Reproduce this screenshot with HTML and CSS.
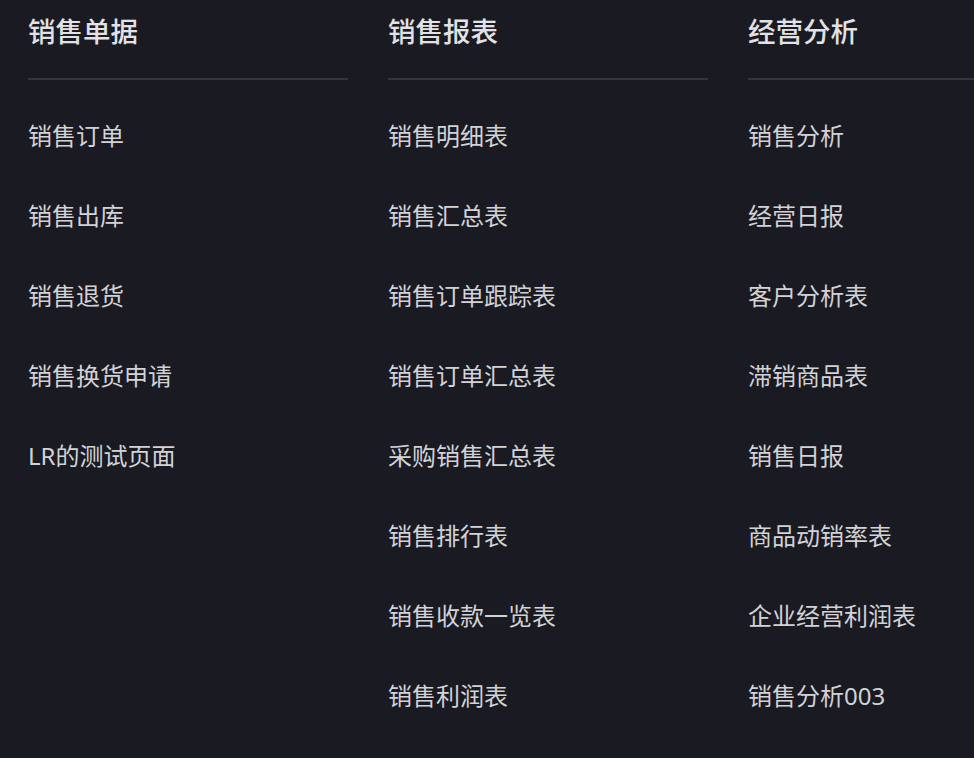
FILE: index.html
```html
<!DOCTYPE html>
<html lang="zh-CN">
<head>
    <meta charset="UTF-8">
    <meta name="viewport" content="width=device-width, initial-scale=1.0">
    <title>销售菜单</title>
    <link rel="stylesheet" href="styles.css">
</head>
<body>
    <div class="menu">
        <div class="menu-col">
            <h3 class="menu-title">销售单据</h3>
            <ul class="menu-list">
                <li>销售订单</li>
                <li>销售出库</li>
                <li>销售退货</li>
                <li>销售换货申请</li>
                <li>LR的测试页面</li>
            </ul>
        </div>
        <div class="menu-col">
            <h3 class="menu-title">销售报表</h3>
            <ul class="menu-list">
                <li>销售明细表</li>
                <li>销售汇总表</li>
                <li>销售订单跟踪表</li>
                <li>销售订单汇总表</li>
                <li>采购销售汇总表</li>
                <li>销售排行表</li>
                <li>销售收款一览表</li>
                <li>销售利润表</li>
            </ul>
        </div>
        <div class="menu-col">
            <h3 class="menu-title">经营分析</h3>
            <ul class="menu-list">
                <li>销售分析</li>
                <li>经营日报</li>
                <li>客户分析表</li>
                <li>滞销商品表</li>
                <li>销售日报</li>
                <li>商品动销率表</li>
                <li>企业经营利润表</li>
                <li>销售分析003</li>
            </ul>
        </div>
    </div>
</body>
</html>
```

FILE: styles.css
```css
body {
    margin: 0;
    background-color: #1a1b22;
    font-family: "Noto Sans", "Noto Sans CJK SC", sans-serif;
    overflow: hidden;
}
.menu {
    display: grid;
    grid-template-columns: 320px 320px minmax(0, 1fr);
    column-gap: 40px;
    padding: 12px 0 0 28px;
}
.menu-col {
    min-width: 0;
}
.menu-title {
    margin: 0;
    font-size: 27.5px;
    line-height: 40px;
    font-weight: 500;
    color: #e2e2e6;
    padding-bottom: 26px;
    border-bottom: 2px solid #34353c;
}
.menu-list {
    list-style: none;
    margin: 16px 0 0;
    padding: 0;
}
.menu-list li {
    font-size: 24px;
    line-height: 80px;
    color: #d2d2d7;
    white-space: nowrap;
}
```
